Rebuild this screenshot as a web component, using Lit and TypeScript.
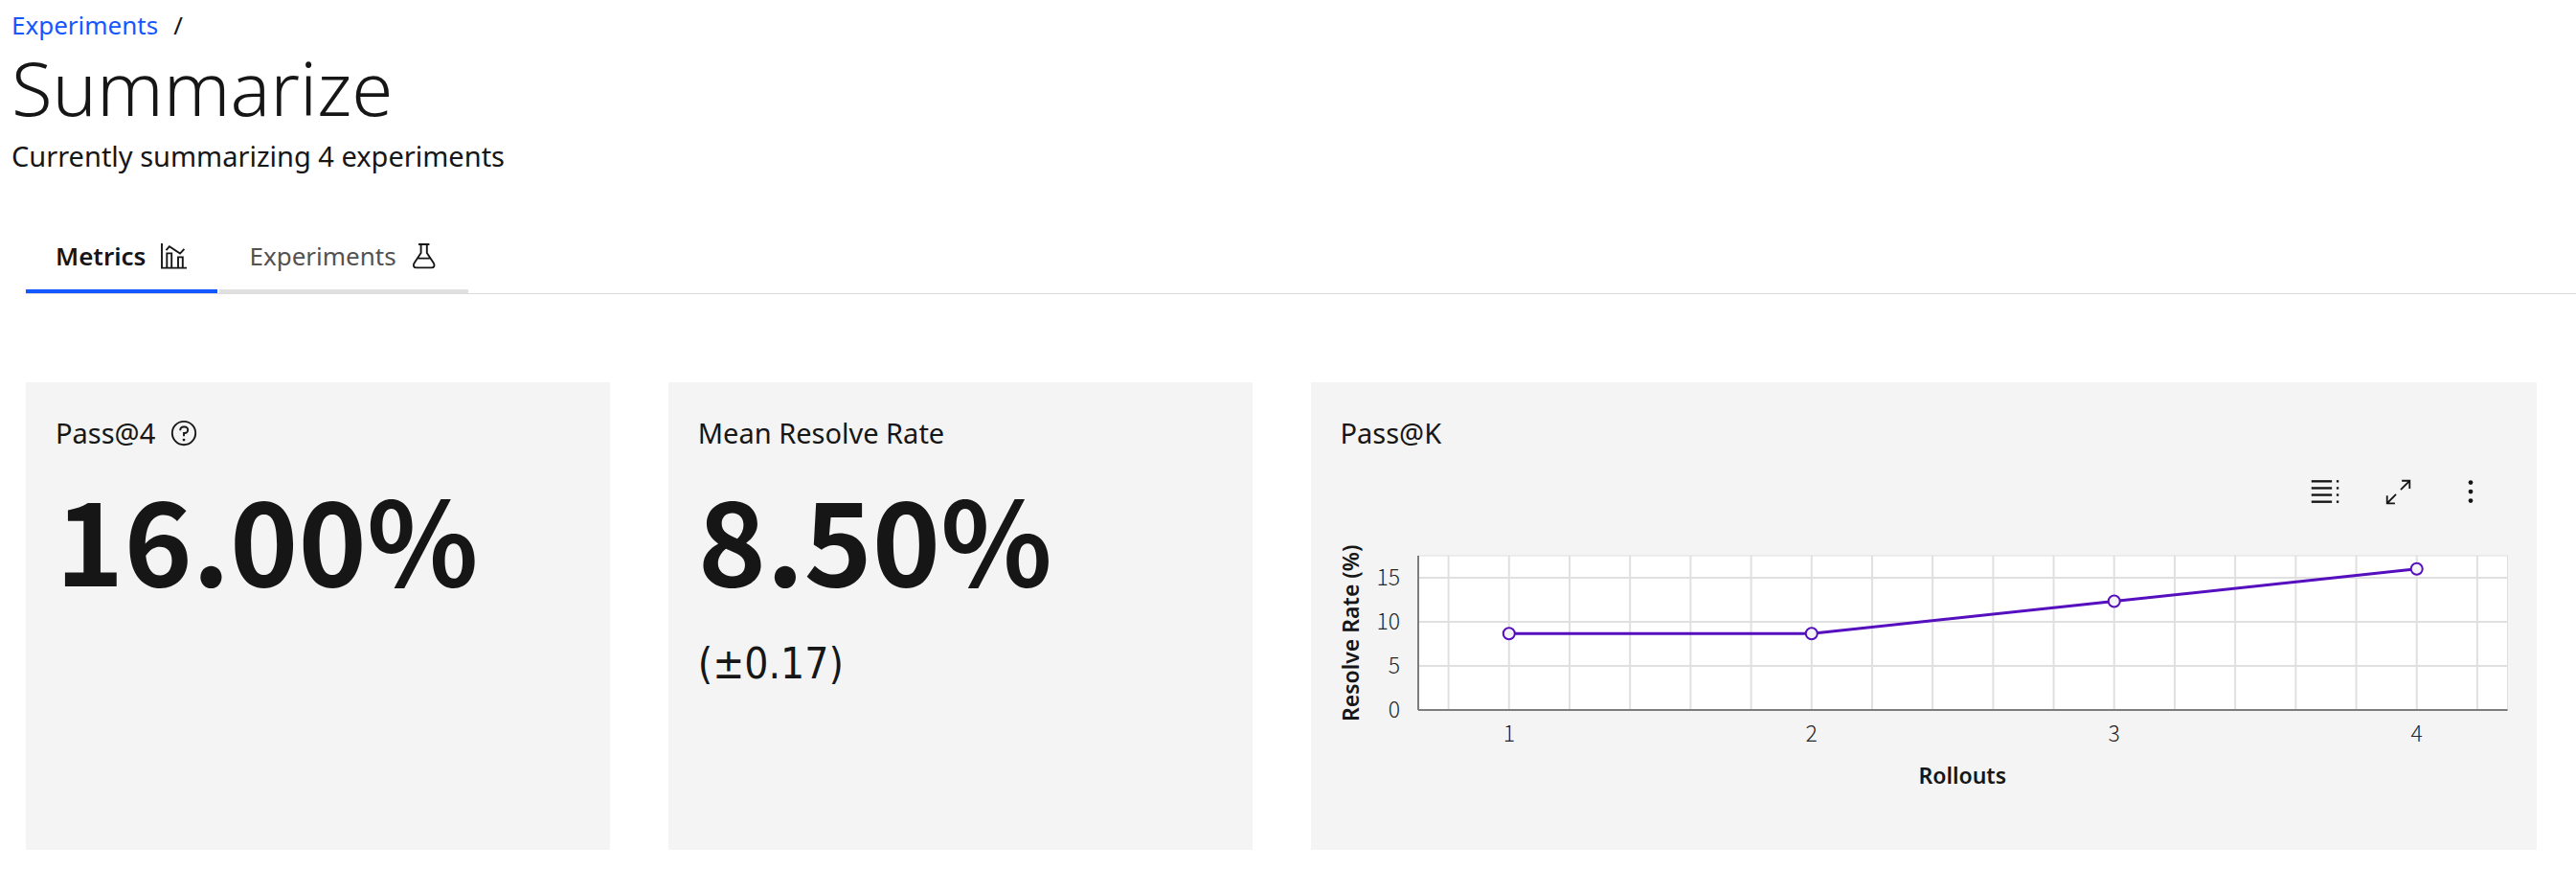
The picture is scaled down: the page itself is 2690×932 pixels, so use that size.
import { LitElement, html, svg, css } from "lit";
import { customElement, property } from "lit/decorators.js";

interface Point {
  rollout: number;
  rate: number;
}

@customElement("pass-chart")
class PassChart extends LitElement {
  @property({ attribute: false }) points: Point[] = [];

  static styles = css`
    :host {
      display: block;
      color: #161616;
    }
    .toolbar {
      display: flex;
      justify-content: flex-end;
      height: 80px;
    }
    .tool {
      display: flex;
      align-items: center;
      justify-content: center;
      width: 76px;
      padding: 0;
      border: 0;
      background: none;
      color: inherit;
      cursor: pointer;
    }
    .tool svg {
      display: block;
      fill: currentColor;
    }
    .body {
      display: grid;
      grid-template-columns: 20px 42px minmax(0, 1fr);
      margin-top: 27px;
    }
    .y-title {
      align-self: start;
      display: flex;
      align-items: center;
      justify-content: center;
      height: 161px;
      writing-mode: vertical-rl;
      transform: rotate(180deg);
      white-space: nowrap;
      font-size: 23px;
      line-height: 20px;
      font-weight: 600;
    }
    .y-ticks,
    .plot {
      display: block;
      width: 100%;
      height: 161px;
      overflow: visible;
    }
    .plot-cell {
      padding-left: 19px;
    }
    .tick {
      font-family: "Noto Sans CJK JP", "Noto Sans", sans-serif;
      font-size: 23px;
      font-weight: 300;
      fill: #262626;
    }
    .x-ticks {
      display: block;
      width: 100%;
      height: 48px;
      overflow: visible;
    }
    .x-title {
      text-align: center;
      font-size: 23px;
      line-height: 40px;
      font-weight: 600;
    }
    .backdrop {
      fill: #ffffff;
    }
    .grid {
      stroke: #e0e0e0;
      stroke-width: 2;
    }
    .edge {
      fill: none;
      stroke: #e0e0e0;
      stroke-width: 1;
    }
    .axis {
      stroke: #7d7d7d;
      stroke-width: 2;
    }
    .series {
      stroke: #560fbe;
      stroke-width: 3;
    }
    .dot {
      fill: #f4f4f4;
      stroke: #560fbe;
      stroke-width: 2;
    }
  `;

  private x(v: number) {
    return `${(((v - 0.7) / 3.6) * 100).toFixed(3)}%`;
  }

  private y(v: number) {
    return `${((1 - v / 17.5) * 100).toFixed(3)}%`;
  }

  render() {
    const columns = Array.from({ length: 18 }, (_, i) => 0.8 + i * 0.2);
    const rows = [0, 5, 10, 15];
    return html`
      <div class="toolbar">
        <button class="tool" aria-label="Show as table">
          <svg width="38" height="38" viewBox="0 0 32 32">
            ${[6, 12, 18, 24].map(
              (v) => svg`<rect x="4" y=${v} width="18" height="2"></rect><rect x="26" y=${v} width="2" height="2"></rect>`
            )}
          </svg>
        </button>
        <button class="tool" aria-label="Make fullscreen">
          <svg width="29" height="29" viewBox="0 0 32 32">
            <path d="M20 2v2h6.586L18 12.582 19.414 14 28 5.414V12h2V2zM14 19.416 12.592 18 4 26.586V20H2v10h10v-2H5.414z"></path>
          </svg>
        </button>
        <button class="tool" aria-label="More options">
          <svg width="38" height="38" viewBox="0 0 32 32">
            <circle cx="16" cy="8" r="2"></circle>
            <circle cx="16" cy="16" r="2"></circle>
            <circle cx="16" cy="24" r="2"></circle>
          </svg>
        </button>
      </div>
      <div class="body">
        <div class="y-title">Resolve Rate (%)</div>
        <svg class="y-ticks" aria-hidden="true">
          ${rows.map((v) => svg`<text class="tick" x="100%" y=${this.y(v)} dy="8" text-anchor="end">${v}</text>`)}
        </svg>
        <div class="plot-cell">
          <svg class="plot" role="img" aria-label="Resolve rate by number of rollouts">
            <rect class="backdrop" width="100%" height="100%"></rect>
            <rect class="edge" width="100%" height="100%"></rect>
            ${columns.map((v) => svg`<line class="grid" x1=${this.x(v)} x2=${this.x(v)} y1="0" y2="100%"></line>`)}
            ${rows.map((v) => svg`<line class="grid" x1="0" x2="100%" y1=${this.y(v)} y2=${this.y(v)}></line>`)}
            <line class="axis" x1="0" x2="0" y1="0" y2="100%"></line>
            <line class="axis" x1="0" x2="100%" y1="100%" y2="100%"></line>
            ${this.points.slice(1).map((p, i) => {
              const q = this.points[i];
              return svg`<line class="series" x1=${this.x(q.rollout)} y1=${this.y(q.rate)} x2=${this.x(p.rollout)} y2=${this.y(p.rate)}></line>`;
            })}
            ${this.points.map((p) => svg`<circle class="dot" cx=${this.x(p.rollout)} cy=${this.y(p.rate)} r="6"></circle>`)}
          </svg>
          <svg class="x-ticks" aria-hidden="true">
            ${this.points.map((p) => svg`<text class="tick" x=${this.x(p.rollout)} y="33" text-anchor="middle">${p.rollout}</text>`)}
          </svg>
          <div class="x-title">Rollouts</div>
        </div>
      </div>
    `;
  }
}

@customElement("app-root")
class AppRoot extends LitElement {
  static styles = css`
    :host {
      display: block;
      background: #ffffff;
      color: #161616;
      font-family: "Noto Sans", "Open Sans", sans-serif;
    }
    .header {
      padding: 8px 12px 0;
    }
    .crumbs {
      display: flex;
      gap: 16px;
      font-size: 26px;
      line-height: 36px;
    }
    .crumbs a {
      color: #1457ff;
      text-decoration: none;
    }
    h1,
    h2,
    p {
      margin: 0;
      font-weight: 400;
    }
    h1 {
      font-size: 78px;
      line-height: 94px;
      font-weight: 300;
    }
    .lead {
      font-size: 29px;
      line-height: 50px;
    }
    .tabs {
      display: flex;
      gap: 2px;
      margin: 44px 0 0 27px;
      border-bottom: 1px solid #dcdcdc;
    }
    .tab {
      display: flex;
      align-items: center;
      gap: 14px;
      height: 74px;
      padding: 0 31px;
      border: 0;
      border-bottom: 4px solid #e0e0e0;
      background: none;
      color: #525252;
      font: inherit;
      font-size: 26px;
      cursor: pointer;
    }
    .tab.active {
      border-bottom-color: #1457ff;
      color: #161616;
      font-weight: 600;
    }
    .tab svg {
      display: block;
      fill: none;
      stroke: #161616;
      stroke-width: 1.9;
    }
    .cards {
      display: grid;
      grid-template-columns: repeat(4, minmax(0, 1fr));
      gap: 61px;
      padding: 92px 41px 46px 27px;
    }
    .card {
      padding: 31px;
      background: #f4f4f4;
    }
    .wide {
      grid-column: span 2;
    }
    .title {
      display: flex;
      align-items: center;
      gap: 15px;
    }
    h2 {
      font-size: 29px;
      line-height: 43px;
    }
    .help {
      padding: 0;
      border: 0;
      background: none;
      color: inherit;
      cursor: pointer;
    }
    .help svg {
      display: block;
      fill: currentColor;
    }
    .value {
      margin-top: 26px;
      font-family: "Noto Sans CJK JP", "Noto Sans", sans-serif;
      font-size: 121px;
      line-height: 122px;
      font-weight: 600;
    }
    .error {
      margin-top: 44px;
      font-family: "DejaVu Sans Condensed", "Noto Sans", sans-serif;
      font-size: 44px;
      line-height: 56px;
    }
    pass-chart {
      margin-bottom: 27px;
    }
  `;

  private points: Point[] = [
    { rollout: 1, rate: 8.67 },
    { rollout: 2, rate: 8.67 },
    { rollout: 3, rate: 12.33 },
    { rollout: 4, rate: 16 },
  ];

  render() {
    return html`
      <header class="header">
        <nav class="crumbs" aria-label="Breadcrumb">
          <a href="#experiments">Experiments</a><span>/</span>
        </nav>
        <h1>Summarize</h1>
        <p class="lead">Currently summarizing 4 experiments</p>
      </header>
      <div class="tabs" role="tablist">
        <button class="tab active" role="tab" aria-selected="true">
          Metrics
          <svg width="30" height="30" viewBox="0 0 30 30">
            <path d="M3 2V27.6H29M8.3 27.6V12.4H13.2V27.6M20 27.6V16.4H24.8V27.6M7.5 9.2L10.9 5.2L22 12.6L26.4 7.8"></path>
          </svg>
        </button>
        <button class="tab" role="tab" aria-selected="false">
          Experiments
          <svg width="30" height="30" viewBox="0 0 30 30">
            <path d="M9 3H20.4M11.6 3V12L4.6 22.6C2.9 25.2 4.2 27.4 6.8 27.4H22.6C25.2 27.4 26.5 25.2 24.8 22.6L17.8 12V3M8.6 17.6H20.8"></path>
          </svg>
        </button>
      </div>
      <main class="cards">
        <section class="card">
          <div class="title">
            <h2>Pass@4</h2>
            <button class="help" aria-label="About Pass@4">
              <svg width="30" height="30" viewBox="0 0 32 32">
                <path d="M16 2a14 14 0 1 0 14 14A14 14 0 0 0 16 2zm0 26a12 12 0 1 1 12-12 12 12 0 0 1-12 12z"></path>
                <path d="M17 8h-1.500A4.490 4.490 0 0 0 11 12.500V13h2v-.5A2.500 2.500 0 0 1 15.500 10H17a2.500 2.500 0 0 1 0 5h-2v4.500h2V17a4.500 4.500 0 0 0 0-9z"></path>
                <circle cx="16" cy="23.500" r="1.500"></circle>
              </svg>
            </button>
          </div>
          <p class="value">16.00%</p>
        </section>
        <section class="card">
          <h2>Mean Resolve Rate</h2>
          <p class="value">8.50%</p>
          <p class="error">(±0.17)</p>
        </section>
        <section class="card wide">
          <h2>Pass@K</h2>
          <pass-chart .points=${this.points}></pass-chart>
        </section>
      </main>
    `;
  }
}
